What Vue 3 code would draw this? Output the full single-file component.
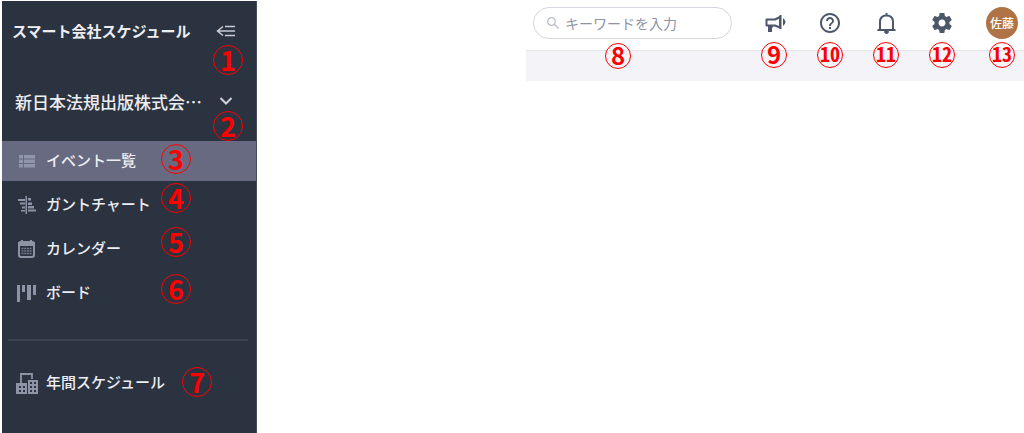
<script setup>
import { ref } from 'vue'

const keyword = ref('')
const menu = [
  { label: 'イベント一覧', icon: 'list', mark: 3, active: true },
  { label: 'ガントチャート', icon: 'gantt', mark: 4 },
  { label: 'カレンダー', icon: 'calendar', mark: 5 },
  { label: 'ボード', icon: 'board', mark: 6 },
]
</script>

<template>
  <div class="page">
    <aside class="sidebar">
      <div class="brand">
        <span class="brand-name">スマート会社スケジュール</span>
        <button class="plain" type="button" aria-label="メニューを閉じる">
          <svg width="20" height="16" viewBox="0 0 20 16" fill="none" stroke="#c9ccd4" stroke-width="1.500">
            <path d="M7 3.500L1.500 8L7 12.500M2 8H19M9 3.500H19M9 12.500H19" />
          </svg>
        </button>
        <span class="mark mark-side">1</span>
      </div>

      <button class="company" type="button">
        <span>新日本法規出版株式会…</span>
        <svg width="14" height="10" viewBox="0 0 14 10" fill="none" stroke="#d0d3da" stroke-width="2">
          <path d="M1.500 2L7 7.500L12.500 2" />
        </svg>
        <span class="mark mark-side">2</span>
      </button>

      <nav class="menu">
        <a v-for="item in menu" :key="item.icon" href="#" class="item" :class="[item.icon, { active: item.active }]">
          <svg v-if="item.icon === 'list'" class="icon" viewBox="0 0 22 22" fill="#9095ac">
            <path d="M3 5h4v3.500H3zM8 5h11v3.500H8zM3 9.500h4v3.500H3zM8 9.500h11v3.500H8zM3 14h4v3.500H3zM8 14h11v3.500H8z" />
          </svg>
          <svg v-else-if="item.icon === 'gantt'" class="icon" viewBox="0 0 22 22" fill="#8d94a5">
            <path d="M9.500 2h1.500v18H9.500zM2 5h7v2H2zM12 4h3v2.500h-3zM4 8.500h5v2H4zM12 8.500h4v2.500h-4zM6 12.500h3v2H6zM12 12h6v2.500h-6zM5 16h4v1.500H5zM12 15.500h8v2h-8z" />
          </svg>
          <svg v-else-if="item.icon === 'calendar'" class="icon" viewBox="0 0 22 22">
            <rect x="3" y="4" width="15" height="15" rx="2" fill="none" stroke="#8d94a5" stroke-width="2" />
            <path d="M2 4h17v4H2zM5 2h2v3H5zM14 2h2v3h-2z" fill="#8d94a5" />
            <path d="M5.500 10.500h10M5.500 13h10M5.500 15.500h10" stroke="#727a8c" stroke-width="1.500" stroke-dasharray="2 .7" />
          </svg>
          <svg v-else class="icon" viewBox="0 0 22 22" fill="#8d94a5">
            <path d="M1 3h3v17H1zM6 3h3v7H6zM11 3h4v15h-4zM17 3h3v10h-3z" />
          </svg>
          <span class="label">{{ item.label }}</span>
          <span class="mark mark-item">{{ item.mark }}</span>
        </a>
      </nav>

      <hr class="rule" />

      <a href="#" class="item annual">
        <svg class="icon" viewBox="0 0 22 22">
          <path d="M5 11V2h11v5" fill="none" stroke="#8d94a5" stroke-width="1.800" />
          <path fill="#8d94a5" fill-rule="evenodd" d="M0 11h11v11H0zM3 14v2h2v-2zM7 14v2h2v-2zM3 18v2h2v-2zM7 18v2h2v-2zM12 8h10v14H12zM14 10v2h2v-2zM18 10v2h2v-2zM14 14v2h2v-2zM18 14v2h2v-2zM14 18v2h2v-2zM18 18v2h2v-2z" />
        </svg>
        <span class="label">年間スケジュール</span>
        <span class="mark mark-annual">7</span>
      </a>
    </aside>

    <header class="top">
      <div class="bar">
        <label class="search">
          <svg width="14" height="14" viewBox="0 0 14 14" fill="none" stroke="#b9bdc9" stroke-width="1.300">
            <circle cx="5.500" cy="5.500" r="3.800" />
            <path d="M8.300 8.300L12.500 12.500" />
          </svg>
          <input v-model="keyword" type="text" placeholder="キーワードを入力" aria-label="キーワードを入力" />
          <span class="mark small mark-search">8</span>
        </label>
        <div class="actions">
          <button class="plain tool" type="button" aria-label="お知らせ">
            <svg width="24" height="24" viewBox="0 0 24 24" fill="none" stroke="#4c586a" stroke-width="2">
              <path d="M4.500 8.500H13L18 6V16.500L13 14.500H4.500Z" stroke-linejoin="round" />
              <path d="M18.500 4V18" />
              <path d="M6 15h5v1.500H10V21H6z" fill="#4c586a" stroke="none" />
              <path d="M21 7Q26 11 21 15Z" fill="#4c586a" stroke="none" />
            </svg>
            <span class="mark small">9</span>
          </button>
          <button class="plain tool" type="button" aria-label="ヘルプ">
            <svg width="24" height="24" viewBox="0 0 24 24" fill="#4c586a">
              <path d="M11 18h2v-2h-2v2zm1-16C6.480 2 2 6.480 2 12s4.480 10 10 10 10-4.480 10-10S17.520 2 12 2zm0 18c-4.410 0-8-3.590-8-8s3.590-8 8-8 8 3.590 8 8-3.590 8-8 8zm0-14c-2.210 0-4 1.790-4 4h2c0-1.100.9-2 2-2s2 .9 2 2c0 2-3 1.750-3 5h2c0-2.250 3-2.500 3-5 0-2.210-1.790-4-4-4z" />
            </svg>
            <span class="mark small two">10</span>
          </button>
          <button class="plain tool" type="button" aria-label="通知">
            <svg width="24" height="24" viewBox="0 0 24 24" fill="none" stroke="#4c586a" stroke-width="2">
              <path d="M3.500 19H21.500M6 19V11C6 7 8.500 4.500 12.500 4.500S19 7 19 11V19M12.500 2V5" />
              <path d="M10.500 20.500h4a2 2 0 0 1-4 0z" fill="#4c586a" stroke="#4c586a" stroke-width="1" />
            </svg>
            <span class="mark small two">11</span>
          </button>
          <button class="plain tool" type="button" aria-label="設定">
            <svg width="24" height="24" viewBox="0 0 24 24" fill="#4c586a">
              <path d="M19.430 12.980c.04-.32.07-.64.07-.98s-.03-.66-.07-.98l2.110-1.650c.19-.15.24-.42.12-.64l-2-3.460c-.12-.22-.39-.3-.61-.22l-2.490 1c-.52-.4-1.080-.73-1.690-.98l-.38-2.650C14.460 2.180 14.250 2 14 2h-4c-.25 0-.46.18-.49.42l-.38 2.650c-.61.25-1.170.59-1.690.98l-2.490-1c-.23-.09-.49 0-.61.22l-2 3.460c-.13.22-.07.49.12.64l2.110 1.650c-.04.32-.07.65-.07.98s.03.66.07.98l-2.110 1.650c-.19.15-.24.42-.12.64l2 3.460c.12.22.39.3.61.22l2.490-1c.52.4 1.080.73 1.690.98l.38 2.650c.03.24.24.42.49.42h4c.25 0 .46-.18.49-.42l.38-2.650c.61-.25 1.170-.59 1.690-.98l2.490 1c.23.09.49 0 .61-.22l2-3.460c.12-.22.07-.49-.12-.64l-2.110-1.650zM12 15.500c-1.930 0-3.500-1.570-3.500-3.500s1.570-3.500 3.500-3.500 3.500 1.570 3.500 3.500-1.570 3.500-3.500 3.500z" />
            </svg>
            <span class="mark small two">12</span>
          </button>
          <button class="plain avatar" type="button">
            佐藤
            <span class="mark small two">13</span>
          </button>
        </div>
      </div>
      <div class="strip"></div>
    </header>
  </div>
</template>

<style>
body {
  background: #fff;
}
</style>

<style scoped>
.page {
  box-sizing: border-box;
  display: flex;
  align-items: stretch;
  min-height: 100vh;
  padding: 1px 0 0 2px;
  font-family: "Noto Sans CJK JP", sans-serif;
}

.page * {
  box-sizing: border-box;
}

button {
  font-family: inherit;
  cursor: pointer;
}

.plain {
  display: flex;
  align-items: center;
  justify-content: center;
  padding: 0;
  border: 0;
  background: none;
}

.sidebar {
  flex: 0 0 255px;
  border-right: 1px solid #454c5a;
  background: #2c3340;
  color: #eceef2;
}

.brand {
  position: relative;
  display: flex;
  align-items: center;
  justify-content: space-between;
  height: 60px;
  padding: 0 20px 0 10px;
}

.brand-name {
  padding-bottom: 2px;
  font-size: 15px;
  font-weight: 700;
  white-space: nowrap;
}

.company {
  position: relative;
  display: flex;
  align-items: center;
  justify-content: space-between;
  width: 100%;
  height: 80px;
  padding: 0 23px 0 13px;
  border: 0;
  background: none;
  color: inherit;
  font-size: 17px;
  font-weight: 500;
  white-space: nowrap;
}

.item {
  position: relative;
  display: flex;
  align-items: center;
  gap: 8px;
  height: 44px;
  padding: 0 14px;
  color: inherit;
  font-size: 15px;
  font-weight: 500;
  text-decoration: none;
}

.label {
  padding-bottom: 3px;
}

.active {
  height: 40px;
  margin-bottom: 2px;
  background: #676a80;
}

.icon {
  flex: none;
  width: 22px;
  height: 22px;
}

.rule {
  height: 2px;
  margin: 24px 8px 20px 6px;
  border: 0;
  background: #3b4250;
}

.mark {
  position: absolute;
  display: flex;
  align-items: center;
  justify-content: center;
  width: 30px;
  height: 30px;
  padding-bottom: 2px;
  border: 1px solid #f00;
  border-radius: 50%;
  color: #f00;
  font-size: 27px;
  font-weight: 700;
  line-height: 1;
}

.mark-side {
  top: 44px;
  right: 13px;
}

.company .mark-side {
  top: 50px;
}

.mark-item {
  top: 3px;
  left: 159px;
}

.gantt .mark-item,
.calendar .mark-item {
  top: 0;
}

.mark-annual {
  top: 6px;
  left: 180px;
}

.top {
  flex: 1;
  margin-left: 269px;
}

.bar {
  display: flex;
  align-items: center;
  justify-content: space-between;
  height: 49px;
  padding: 0 6px 6px 7px;
}

.strip {
  height: 31px;
  border-top: 1px solid #e4e5eb;
  background: #f3f3f8;
}

.search {
  position: relative;
  display: flex;
  align-items: center;
  gap: 5px;
  width: 199px;
  height: 32px;
  padding: 0 12px;
  border: 1px solid #d5d7e0;
  border-radius: 16px;
}

.search svg {
  flex: none;
}

.search input {
  width: 100%;
  min-width: 0;
  padding: 0;
  border: 0;
  outline: 0;
  background: none;
  color: #4c586a;
  font-family: inherit;
  font-size: 14px;
}

.search input::placeholder {
  color: #8d94a5;
  opacity: 1;
}

.actions {
  display: flex;
  align-items: center;
  gap: 32px;
}

.tool {
  position: relative;
  width: 24px;
  height: 32px;
}

.avatar {
  position: relative;
  width: 32px;
  height: 32px;
  border-radius: 50%;
  background: #b07346;
  color: #fff;
  font-size: 12px;
  font-weight: 500;
}

.small {
  top: 35px;
  left: 50%;
  width: 26px;
  height: 26px;
  margin-left: -13px;
  font-size: 24px;
}

.two {
  font-size: 20px;
  font-feature-settings: "hwid";
}

.mark-search {
  left: 84px;
}
</style>
